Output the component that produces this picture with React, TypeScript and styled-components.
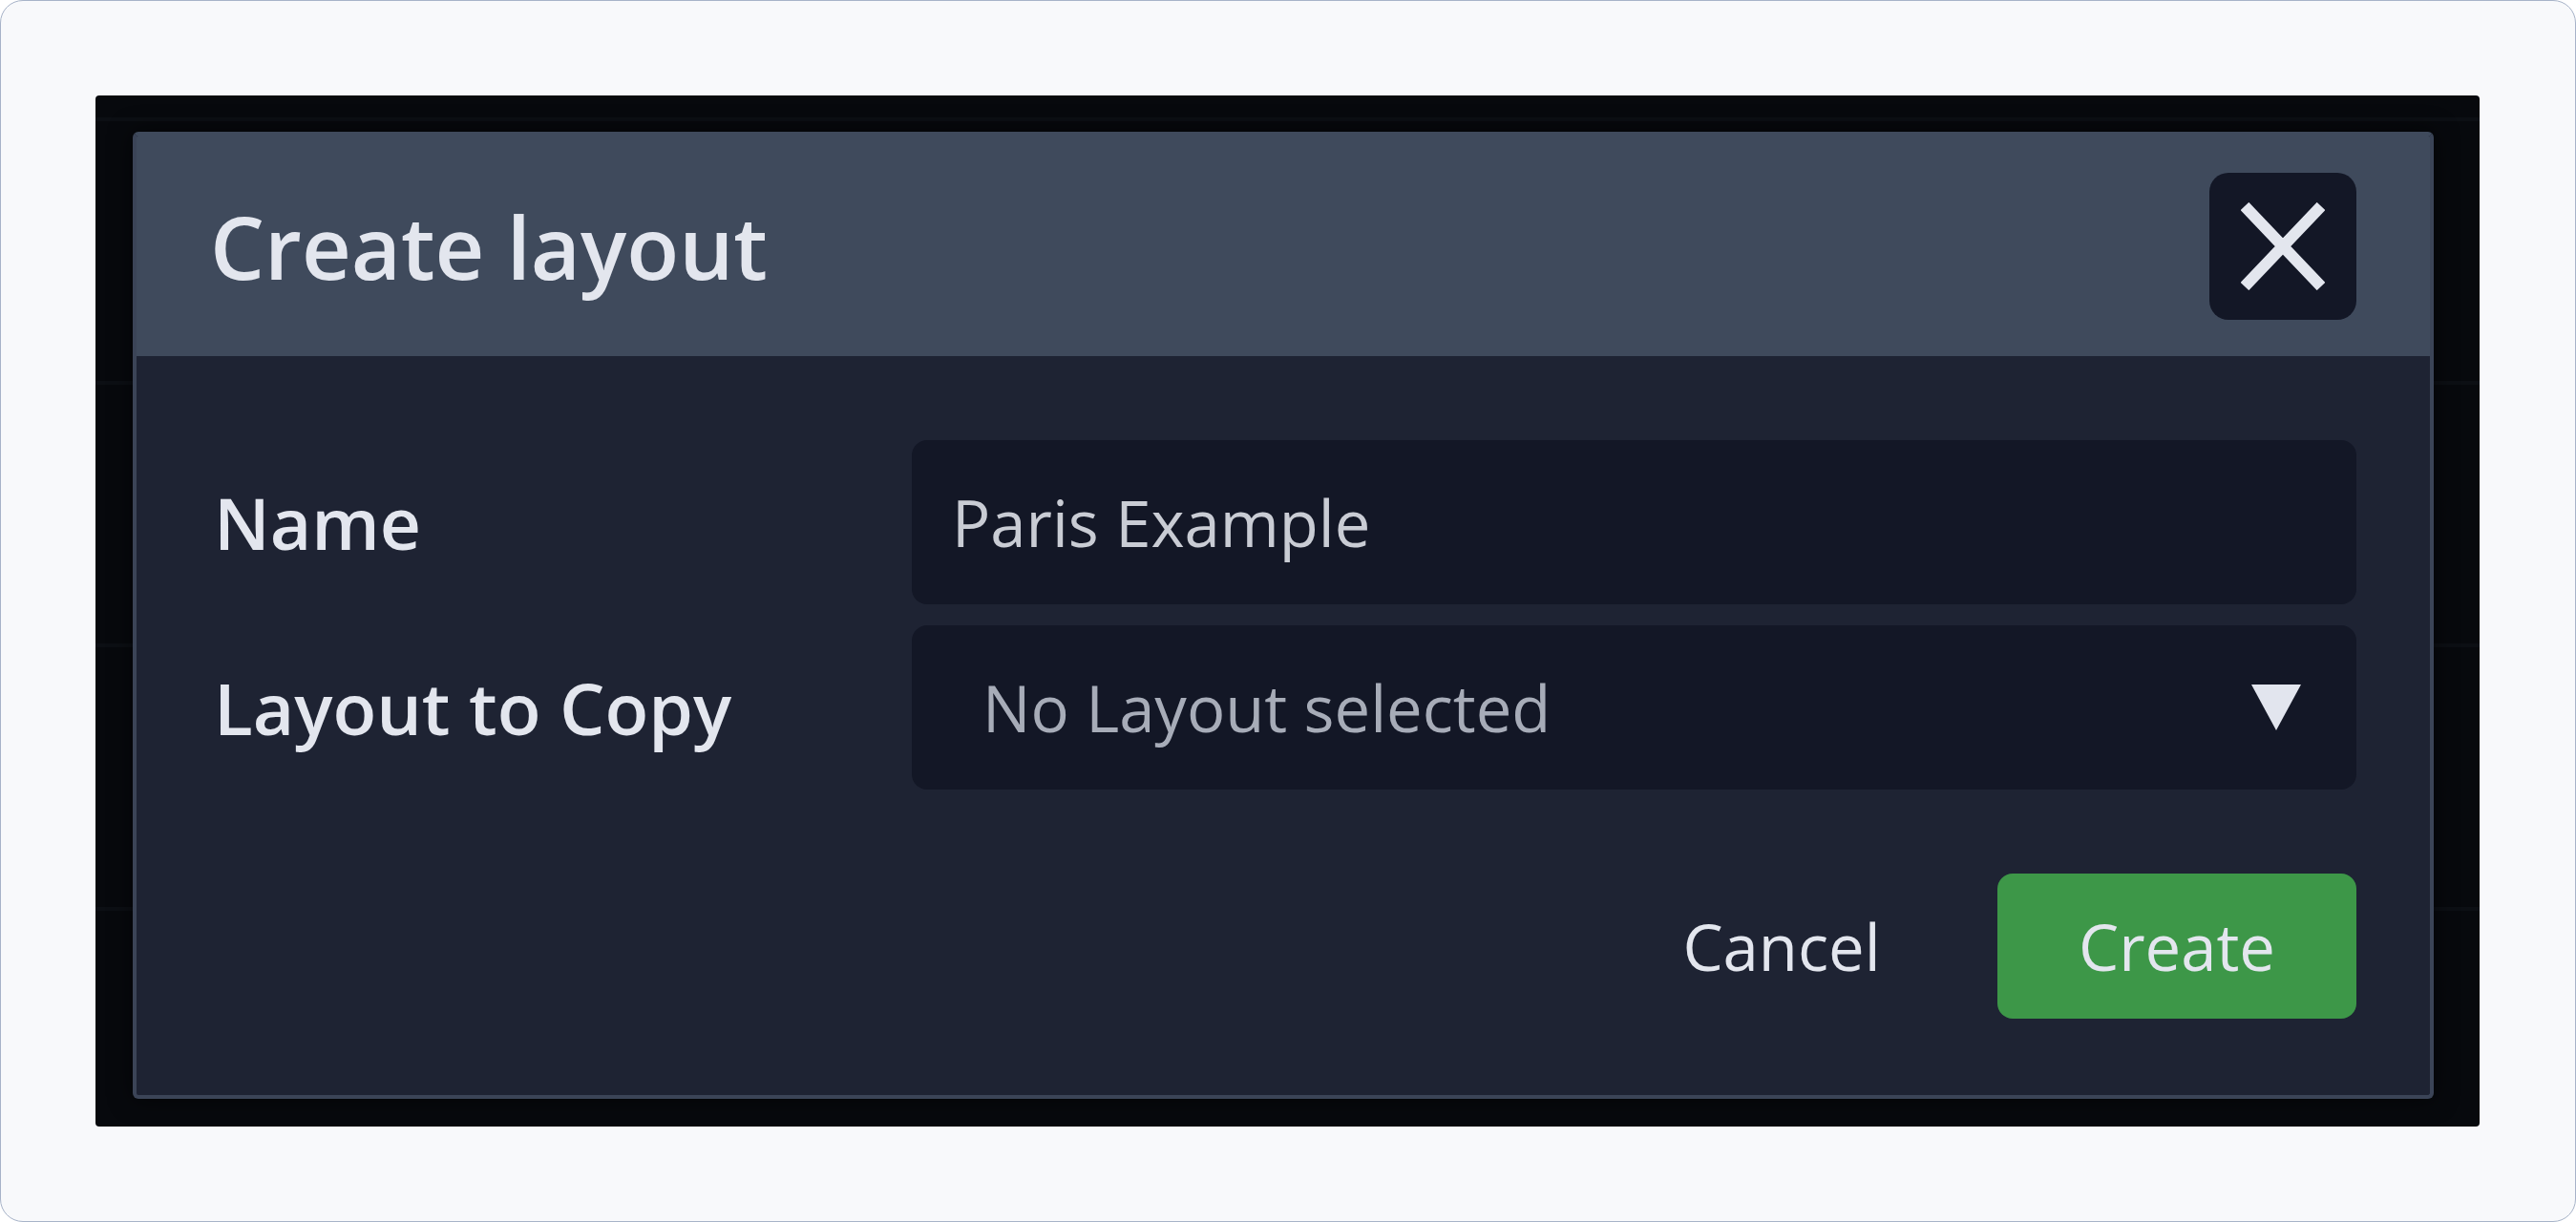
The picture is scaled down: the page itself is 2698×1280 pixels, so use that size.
import React from "react";
import styled, { createGlobalStyle } from "styled-components";

const GlobalStyle = createGlobalStyle`
  html, body {
    margin: 0;
    padding: 0;
    background: #ffffff;
  }
  * { box-sizing: border-box; }
  body {
    font-family: "Open Sans", "Liberation Sans", sans-serif;
  }
`;

const Frame = styled.div`
  width: 2698px;
  height: 1280px;
  display: flex;
  padding: 99px 100px 99px 99px;
  background: #f8f9fb;
  border: 1px solid #a7b3c8;
  border-radius: 24px;
`;

const Panel = styled.div`
  position: relative;
  flex: 1;
  background: #07090d;
  border-radius: 4px;
  overflow: hidden;
  padding-top: 23px;
`;

const BgRow = styled.div`
  height: 275.5px;
  border-top: 4px solid #0c0f14;
`;

const Dialog = styled.div`
  position: absolute;
  left: 39px;
  top: 38px;
  width: 2410px;
  height: 1013px;
  display: flex;
  flex-direction: column;
  background: #1e2333;
  border: 4px solid #3b4457;
  border-top-color: #3f4a5c;
  border-radius: 6px;
  overflow: hidden;
  box-shadow: 0 0 24px rgba(0, 0, 0, 0.6);
`;

const Header = styled.div`
  height: 231px;
  flex: none;
  display: flex;
  align-items: center;
  justify-content: space-between;
  padding: 0 77px;
  background: #3f4a5c;
`;

const Title = styled.h1`
  margin: 0;
  font-family: "Open Sans", "Liberation Sans", sans-serif;
  font-size: 90px;
  font-weight: 600;
  line-height: 1;
  color: #e3e6ee;
`;

const CloseButton = styled.button`
  width: 154px;
  height: 154px;
  display: flex;
  align-items: center;
  justify-content: center;
  padding: 0;
  border: none;
  border-radius: 20px;
  background: #131726;
  color: #e3e6ee;
`;

const Body = styled.div`
  flex: 1;
  display: flex;
  flex-direction: column;
  padding: 88px 77px 80px;
`;

const FormGrid = styled.div`
  display: grid;
  grid-template-columns: 735px 1fr;
  row-gap: 22px;
  align-items: center;
`;

const Label = styled.label`
  font-family: "Open Sans", "Liberation Sans", sans-serif;
  font-size: 75px;
  font-weight: 600;
  color: #e3e6ee;
  padding-left: 4px;
`;

const Field = styled.div<{ $muted?: boolean; $inset: number }>`
  height: 172px;
  display: flex;
  align-items: center;
  justify-content: space-between;
  padding: 0 58px 0 ${(p) => p.$inset}px;
  background: #131726;
  border-radius: 16px;
  font-family: "Open Sans", "Liberation Sans", sans-serif;
  font-size: 67px;
  font-weight: 400;
  color: ${(p) => (p.$muted ? "#a7acb8" : "#c9ccd4")};
`;

const Footer = styled.div`
  margin-top: 88px;
  display: flex;
  justify-content: flex-end;
  gap: 38px;
`;

const Button = styled.button<{ $primary?: boolean }>`
  height: 152px;
  width: 376px;
  display: flex;
  align-items: center;
  justify-content: center;
  border: none;
  border-radius: 16px;
  background: ${(p) => (p.$primary ? "#3d9748" : "transparent")};
  color: #e3e6ee;
  font-family: "Open Sans", "Liberation Sans", sans-serif;
  font-size: 67px;
  font-weight: 500;
`;

const XIcon = () => (
  <svg width="88" height="92" viewBox="0 0 88 92">
    <path d="M4 4 L84 88 M84 4 L4 88" stroke="currentColor" strokeWidth="12" fill="none" />
  </svg>
);

const Caret = () => (
  <svg width="52" height="48" viewBox="0 0 52 48">
    <polygon points="0,0 52,0 26,48" fill="#e2e5ee" />
  </svg>
);

export default function App() {
  return (
    <>
      <GlobalStyle />
      <Frame>
        <Panel>
          <BgRow />
          <BgRow />
          <BgRow />
          <BgRow />
          <Dialog>
            <Header>
              <Title>Create layout</Title>
              <CloseButton aria-label="Close">
                <XIcon />
              </CloseButton>
            </Header>
            <Body>
              <FormGrid>
                <Label>Name</Label>
                <Field $inset={42}>Paris Example</Field>
                <Label>Layout to Copy</Label>
                <Field $inset={74} $muted>
                  <span>No Layout selected</span>
                  <Caret />
                </Field>
              </FormGrid>
              <Footer>
                <Button>Cancel</Button>
                <Button $primary>Create</Button>
              </Footer>
            </Body>
          </Dialog>
        </Panel>
      </Frame>
    </>
  );
}
